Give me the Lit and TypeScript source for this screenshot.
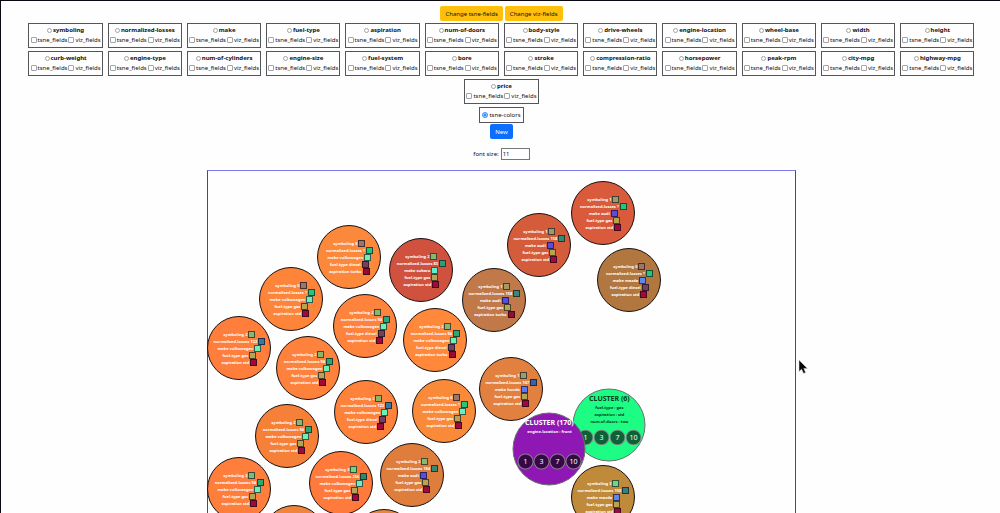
import { LitElement, html, css } from "lit";
import { customElement, property } from "lit/decorators.js";
import { styleMap } from "lit/directives/style-map.js";

const FIELDS = [
  "symboling", "normalized-losses", "make", "fuel-type", "aspiration", "num-of-doors",
  "body-style", "drive-wheels", "engine-location", "wheel-base", "width", "height",
  "curb-weight", "engine-type", "num-of-cylinders", "engine-size", "fuel-system", "bore",
  "stroke", "compression-ratio", "horsepower", "peak-rpm", "city-mpg", "highway-mpg", "price",
];

const KEYS = ["symboling", "normalized-losses", "make", "fuel-type", "aspiration"];

const SWATCH: Record<string, Record<string, string>> = {
  symboling: { "0": "#9c7468", "1": "#a09a68", "2": "#86b870", "3": "#74d67c" },
  "normalized-losses": {
    "?": "#26c47c", "94": "#2aa874", "83": "#2aa070", "122": "#3a78a0", "107": "#3a62a8",
    "158": "#388878", "164": "#388878", "150": "#388080", "256": "#2c8a68",
  },
  make: { volkswagen: "#6cf0b8", audi: "#5a4ce0", mazda: "#5f88ee", honda: "#5a7cf0", subaru: "#60eed0" },
  "fuel-type": { gas: "#b4a454", diesel: "#74405c" },
  aspiration: { std: "#a00a3a", turbo: "#980a34" },
};

type CarNode = { x: number; y: number; fill: string; values: string[] };
const node = (x: number, y: number, fill: string, ...values: string[]): CarNode => ({ x, y, fill, values });

/* Centres, relative to the top left corner of the canvas. */
const NODES: CarNode[] = [
  node(141, 86, "#fb883b", "0", "?", "volkswagen", "diesel", "turbo"),
  node(83, 128, "#fe843a", "0", "?", "volkswagen", "gas", "std"),
  node(157, 155, "#ff833c", "2", "94", "volkswagen", "diesel", "std"),
  node(31, 177, "#ff7e3c", "2", "122", "volkswagen", "gas", "std"),
  node(100, 197, "#ff823c", "2", "94", "volkswagen", "gas", "std"),
  node(158, 241, "#ff823a", "2", "122", "volkswagen", "diesel", "std"),
  node(79, 265, "#f68038", "2", "94", "volkswagen", "gas", "std"),
  node(31, 318, "#ff7e3c", "2", "94", "volkswagen", "gas", "std"),
  node(133, 312, "#ff7a3b", "3", "256", "volkswagen", "gas", "std"),
  node(86, 366, "#f0843a"),
  node(176, 370, "#e8863a"),
  node(213, 99, "#d0523e", "2", "83", "subaru", "gas", "std"),
  node(331, 74, "#d55c3a", "1", "158", "audi", "gas", "std"),
  node(286, 129, "#c17949", "1", "158", "audi", "gas", "turbo"),
  node(395, 42, "#da5a3c", "1", "?", "audi", "gas", "std"),
  node(421, 109, "#b1773f", "0", "?", "mazda", "diesel", "std"),
  node(227, 169, "#ff883a", "2", "94", "volkswagen", "diesel", "turbo"),
  node(236, 240, "#f98a3a", "0", "?", "volkswagen", "gas", "std"),
  node(303, 218, "#e28040", "1", "107", "honda", "gas", "std"),
  node(204, 304, "#df7d3c", "2", "164", "audi", "gas", "std"),
  node(395, 326, "#bf8a3a", "3", "150", "mazda", "gas", "std"),
];

type Cluster = { x: number; y: number; fill: string; ink: string; dot: string; title: string; lines: string[] };
const CLUSTERS: Cluster[] = [
  {
    x: 401, y: 254, fill: "#1dfd83", ink: "#0b3a22", dot: "#0c6236", title: "CLUSTER (6)",
    lines: ["fuel-type : gas", "aspiration : std", "num-of-doors : two"],
  },
  { x: 341, y: 278, fill: "#8f17b4", ink: "#ffffff", dot: "#360845", title: "CLUSTER (170)", lines: ["engine-location : front"] },
];

@customElement("field-card")
class FieldCard extends LitElement {
  @property() name = "";

  static styles = css`
    :host { display: block; border: 1px solid #55555a; padding: 1px 0; height: 25px; box-sizing: border-box; }
    .row { display: flex; align-items: center; justify-content: center; height: 10px; gap: 1px; line-height: 10px; white-space: nowrap; }
    .head { font-weight: 700; }
    label { display: flex; align-items: center; gap: 1px; }
    input { appearance: none; margin: 0; width: 6px; height: 6px; box-sizing: border-box; border: 1px solid #a4a4a8; border-radius: 1px; background: #fff; }
    input[type="radio"] { width: 5px; height: 5px; border-radius: 50%; }
    input:checked { background: #1677ff; border-color: #1677ff; }
  `;

  render() {
    return html`
      <div class="row head"><label><input type="radio" name="field" />${this.name}</label></div>
      <div class="row">
        <label><input type="checkbox" />tsne_fields</label>
        <label><input type="checkbox" />viz_fields</label>
      </div>
    `;
  }
}

@customElement("app-root")
class AppRoot extends LitElement {
  static styles = css`
    :host {
      display: flex; flex-direction: column; align-items: center; box-sizing: border-box;
      height: 100vh; overflow: hidden; position: relative;
      border-top: 1px solid #0c0812; border-left: 1px solid #0c0812;
      padding: 5px 0 0 2px; background: #fefefe; color: #111;
      font: 6px/10px "Noto Sans", "Open Sans", sans-serif;
    }
    .actions { display: flex; gap: 2px; }
    button { border: 0; border-radius: 2px; padding: 0 5px; height: 15px; font: inherit; color: #111; background: #ffbf0b; }
    .new { background: #0d6efd; color: #fff; margin-top: 1px; }
    .fields { display: flex; flex-wrap: wrap; justify-content: center; gap: 3px 5px; margin-top: 2px; width: 95%; padding: 0 1px; }
    .fields field-card { flex: 0 0 calc((100% - 56px) / 12); min-width: 0; }
    .colors { display: flex; align-items: center; gap: 1px; border: 1px solid #55555a; margin-top: 3px; padding: 0 2px; height: 16px; box-sizing: border-box; }
    .colors input { appearance: none; margin: 0; width: 6px; height: 6px; box-sizing: border-box; border: 1px solid #4e9bff; border-radius: 50%; background: #1677ff; box-shadow: inset 0 0 0 1px #b8d8ff; }
    .size { display: flex; align-items: center; gap: 2px; margin-top: 9px; }
    .size input { width: 29px; height: 12px; box-sizing: border-box; border: 1px solid #777; border-radius: 0; padding: 0 1px; font: inherit; color: #111; background: #fff; outline: 0; }
    .canvas { position: relative; flex: 1; width: 59%; box-sizing: border-box; margin-top: 10px; border: 1px solid #3a3af0; border-top-color: #7d7bf2; border-bottom: 0; }
    .node { position: absolute; width: 64px; height: 64px; box-sizing: border-box; border: 1px solid #181010; border-radius: 50%; transform: translate(-50%, -50%); display: flex; flex-direction: column; align-items: center; justify-content: center; color: #fff; font-size: 4px; font-weight: 700; line-height: 7px; white-space: nowrap; }
    .line { display: flex; align-items: center; gap: 1px; height: 7px; }
    .swatch { flex: none; width: 7px; height: 7px; box-sizing: border-box; border: 1px solid rgba(20, 10, 20, 0.65); }
    .cluster { position: absolute; width: 73px; height: 73px; box-sizing: border-box; border: 1px solid #66706c; border-radius: 50%; transform: translate(-50%, -50%); display: flex; flex-direction: column; align-items: center; padding-top: 4px; font-size: 4px; font-weight: 700; line-height: 7px; white-space: nowrap; }
    .title { font-size: 7px; line-height: 10px; }
    .lines { height: 26px; text-align: center; }
    .dots { display: flex; }
    .dot { width: 16px; height: 16px; box-sizing: border-box; border: 1px solid rgba(210, 210, 210, 0.55); border-radius: 50%; color: #fff; font-size: 7px; font-weight: 400; line-height: 14px; text-align: center; }
    .pointer { position: absolute; left: 797px; top: 358px; width: 10px; height: 15px; }
  `;

  private car(n: CarNode) {
    return html`<div class="node" style=${styleMap({ left: `${n.x}px`, top: `${n.y}px`, background: n.fill })}>
      ${n.values.map((v, i) => html`<div class="line">
        <span>${KEYS[i]} ${v}</span><span class="swatch" style=${styleMap({ backgroundColor: SWATCH[KEYS[i]][v] })}></span>
      </div>`)}
    </div>`;
  }

  private cluster(c: Cluster) {
    return html`<div class="cluster" style=${styleMap({ left: `${c.x}px`, top: `${c.y}px`, background: c.fill })}>
      <div class="title" style=${styleMap({ color: c.ink })}>${c.title}</div>
      <div class="lines" style=${styleMap({ color: c.ink })}>${c.lines.map((l) => html`<div>${l}</div>`)}</div>
      <div class="dots">${[1, 3, 7, 10].map((d) => html`<div class="dot" style=${styleMap({ background: c.dot })}>${d}</div>`)}</div>
    </div>`;
  }

  render() {
    return html`
      <div class="actions">
        <button type="button">Change tsne-fields</button>
        <button type="button">Change viz-fields</button>
      </div>
      <div class="fields">${FIELDS.map((f) => html`<field-card name=${f}></field-card>`)}</div>
      <label class="colors"><input type="radio" name="mode" checked />tsne-colors</label>
      <button type="button" class="new">New</button>
      <label class="size">font size: <input type="text" value="11" /></label>
      <div class="canvas">${NODES.map((n) => this.car(n))}${CLUSTERS.map((c) => this.cluster(c))}</div>
      <svg class="pointer" viewBox="0 0 10 15"><path d="M1 1V12.5L3.6 10.2L5.6 14.4L7.6 13.4L5.8 9.4H9.4Z" fill="#080808" stroke="#ddd" stroke-width=".5" /></svg>
    `;
  }
}
